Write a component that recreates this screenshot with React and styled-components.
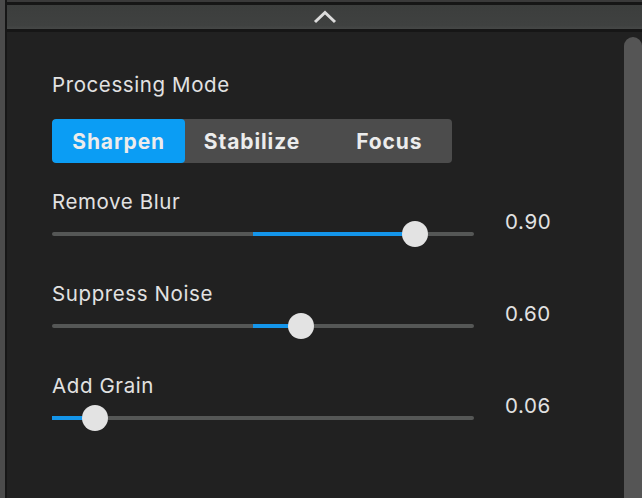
import { useState } from "react";
import styled, { createGlobalStyle } from "styled-components";

const GlobalStyle = createGlobalStyle`
  html, body {
    margin: 0;
    padding: 0;
    background: #4a4a4a;
    height: 100%;
    overflow: hidden;
  }
  #root {
    height: 100%;
  }
`;

const Frame = styled.div`
  display: flex;
  height: 498px;
  width: 642px;
  font-family: Inter, "Noto Sans", sans-serif;
`;

const EdgeStrip = styled.div`
  width: 5px;
  background: #4b4b4b;
  border-right: 2px solid #161616;
`;

const Main = styled.div`
  flex: 1;
  display: flex;
  flex-direction: column;
  border-top: 2px solid #3a3a3a;
`;

const CollapseBar = styled.div`
  height: 24px;
  background: linear-gradient(#3c3e3d, #3f4140 85%, #464847);
  border-top: 3px solid #161616;
  border-bottom: 3px solid #161616;
  display: flex;
  align-items: center;
  justify-content: center;
  color: #dcdcdc;
`;

const Body = styled.div`
  flex: 1;
  display: flex;
  background: #212121;
`;

const Panel = styled.div`
  flex: 1;
  padding: 41px 0 0 45px;
  display: flex;
  flex-direction: column;
`;

const ScrollTrack = styled.div`
  width: 18px;
  padding-top: 5px;
  display: flex;
`;

const ScrollThumb = styled.div`
  flex: 1;
  background: #555555;
  border-radius: 9px 9px 0 0;
`;

const Label = styled.div`
  font-size: 20.5px;
  line-height: 24px;
  color: #e2e2e2;
  letter-spacing: 0.6px;
`;

const Segmented = styled.div`
  margin-top: 22px;
  width: 400px;
  height: 44px;
  display: grid;
  grid-template-columns: repeat(3, 1fr);
  background: #4c4c4c;
  border-radius: 4px;
  overflow: hidden;
`;

const Segment = styled.button`
  border: none;
  border-radius: 4px;
  margin: 0;
  padding: 0 0 0 ${(p) => p.$shift}px;
  font-family: inherit;
  font-size: 21px;
  font-weight: 700;
  letter-spacing: 0.9px;
  color: #ececec;
  background: ${(p) => (p.$active ? "#0b9df4" : "transparent")};
  cursor: pointer;
`;

const SliderBlock = styled.div`
  margin-top: ${(p) => p.$gap}px;
  display: flex;
  align-items: center;
`;

const SliderCol = styled.div`
  width: 422px;
  display: flex;
  flex-direction: column;
  gap: 6px;
`;

const Track = styled.div`
  position: relative;
  height: 28px;
  &::before {
    content: "";
    position: absolute;
    left: 0;
    right: 0;
    top: 12px;
    height: 4px;
    border-radius: 2px;
    background: #555756;
  }
`;

const Fill = styled.div`
  position: absolute;
  top: 12px;
  height: 4px;
  background: #1495ea;
`;

const Thumb = styled.div`
  position: absolute;
  top: 1px;
  width: 26px;
  height: 26px;
  margin-left: -13px;
  border-radius: 50%;
  background: #e3e3e3;
`;

const Value = styled.div`
  margin: 6px 0 0 31px;
  font-size: 20.5px;
  line-height: 24px;
  letter-spacing: 0.6px;
  color: #e2e2e2;
`;

const Chevron = () => (
  <svg width="24" height="14" viewBox="0 0 24 14" fill="none">
    <path d="M2 12 L12 2.5 L22 12" stroke="currentColor" strokeWidth="3" />
  </svg>
);

const modes = [
  { name: "Sharpen", shift: 0 },
  { name: "Stabilize", shift: 0 },
  { name: "Focus", shift: 8 },
];

const sliders = [
  { label: "Remove Blur", value: "0.90", from: 200.5, thumb: 362.5, gap: 27 },
  { label: "Suppress Noise", value: "0.60", from: 200.5, thumb: 248.5, gap: 34 },
  { label: "Add Grain", value: "0.06", from: 0, thumb: 42.5, gap: 34 },
];

const Slider = ({ label, value, from, thumb, gap }) => (
  <SliderBlock $gap={gap}>
    <SliderCol>
      <Label>{label}</Label>
      <Track>
        <Fill style={{ left: from, width: thumb - from }} />
        <Thumb style={{ left: thumb }} />
      </Track>
    </SliderCol>
    <Value>{value}</Value>
  </SliderBlock>
);

export default function App() {
  const [mode, setMode] = useState("Sharpen");
  return (
    <>
      <GlobalStyle />
      <Frame>
        <EdgeStrip />
        <Main>
          <CollapseBar>
            <Chevron />
          </CollapseBar>
          <Body>
            <Panel>
              <Label>Processing Mode</Label>
              <Segmented>
                {modes.map((m) => (
                  <Segment
                    key={m.name}
                    $active={mode === m.name}
                    $shift={m.shift}
                    onClick={() => setMode(m.name)}
                  >
                    {m.name}
                  </Segment>
                ))}
              </Segmented>
              {sliders.map((s) => (
                <Slider key={s.label} {...s} />
              ))}
            </Panel>
            <ScrollTrack>
              <ScrollThumb />
            </ScrollTrack>
          </Body>
        </Main>
      </Frame>
    </>
  );
}
